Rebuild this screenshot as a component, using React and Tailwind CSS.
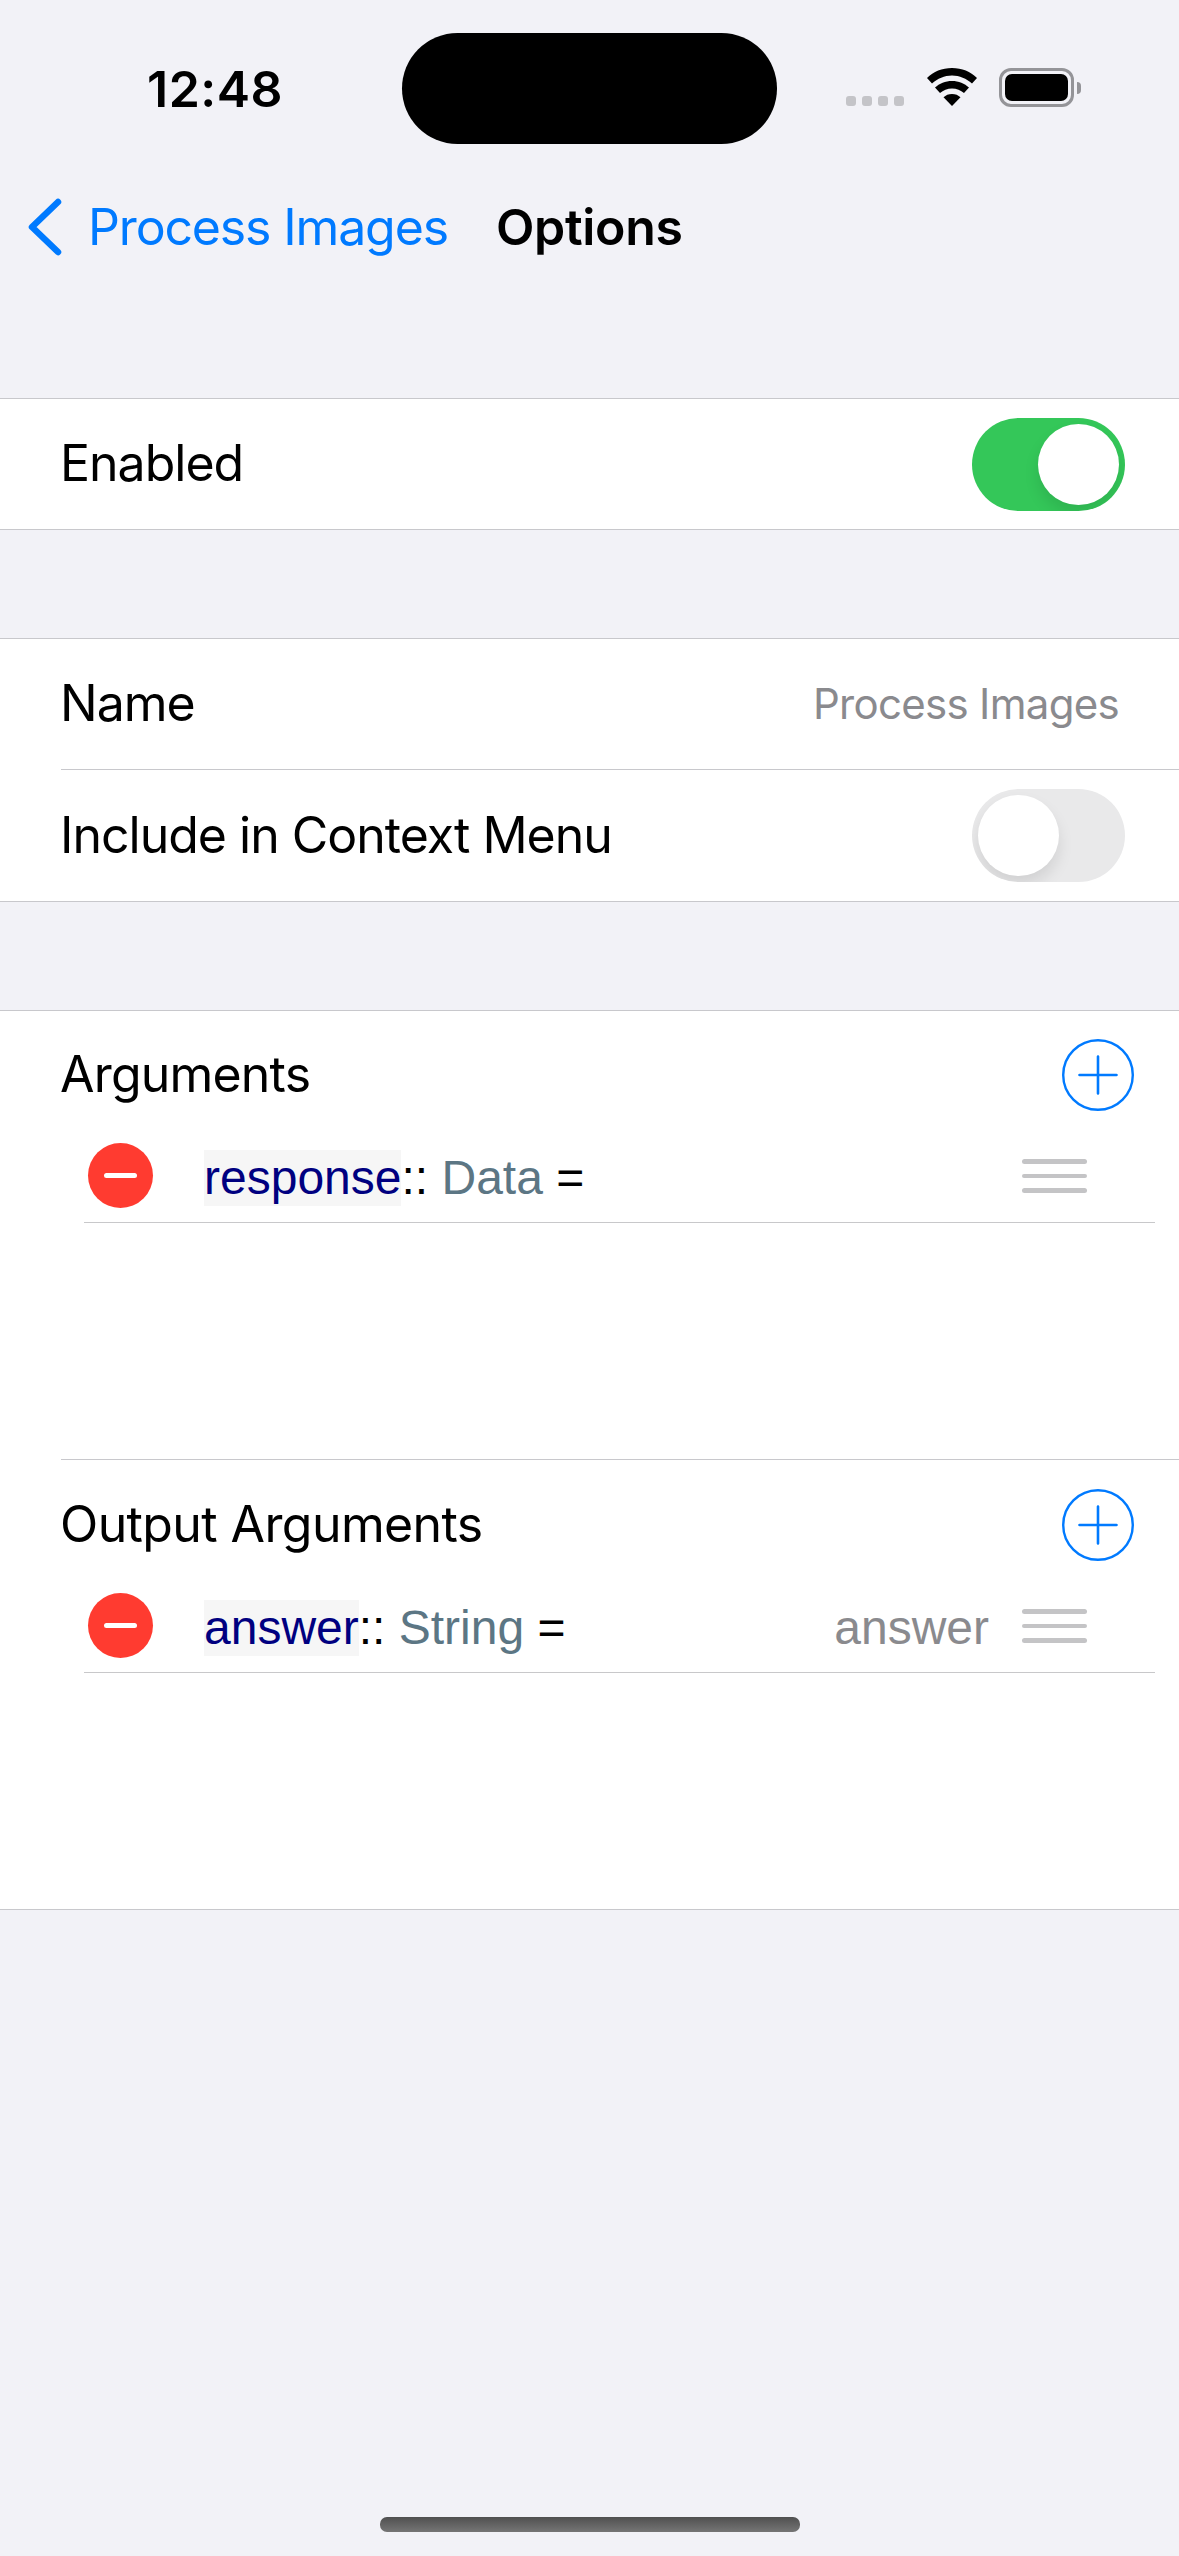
const sans = "font-['Inter','Noto_Sans',sans-serif]";
const label = "text-[50px] tracking-[-1px]";

function Toggle({ on }) {
  return (
    <div className={`w-[153px] h-[93px] rounded-full overflow-hidden flex items-center px-[6px] ${on ? "bg-[#34c759] justify-end" : "bg-[#e9e9ea] justify-start"}`}>
      <div className="w-[81px] h-[81px] rounded-full bg-white shadow-[0_9px_15px_rgba(0,0,0,0.1)]" />
    </div>
  );
}

function AddIcon() {
  return (
    <svg width="72" height="72" viewBox="0 0 72 72" fill="none" stroke="#007aff" strokeLinecap="round">
      <circle cx="36" cy="36" r="34.8" strokeWidth="2.4" />
      <path d="M36 17.5v37M17.5 36h37" strokeWidth="2.6" />
    </svg>
  );
}

function ArgRow({ name, type, value }) {
  return (
    <div className="ml-[84px] mr-[24px] h-[94px] flex items-center border-b-[1.5px] border-[#c8c8ca]">
      <div className="ml-[4px] mt-[1px] w-[65px] h-[65px] rounded-full bg-[#ff3b30] flex items-center justify-center shrink-0">
        <div className="w-[33px] h-[5px] rounded-full bg-white" />
      </div>
      <div className="ml-[51px] pt-[6px] flex items-center font-['Liberation_Sans',sans-serif] text-[48px] leading-[56px] text-black">
        <span className="bg-[#f6f6f6] text-[#000080]">{name}</span>
        <span>::&nbsp;</span>
        <span className="text-[#5c7684]">{type}</span>
        <span>&nbsp;=</span>
      </div>
      <div className="ml-auto pt-[6px] text-[48px] text-[#8a8a8e] font-['Liberation_Sans',sans-serif] mr-[33px]">{value}</div>
      <div className="mr-[68px] mt-[2px] w-[65px] flex flex-col gap-[10px] shrink-0">
        <div className="h-[4.5px] rounded-full bg-[#c4c4c6]" />
        <div className="h-[4.5px] rounded-full bg-[#c4c4c6]" />
        <div className="h-[4.5px] rounded-full bg-[#c4c4c6]" />
      </div>
    </div>
  );
}

export default function App() {
  return (
    <div className={`w-[1179px] h-[2556px] bg-[#f2f2f7] flex flex-col overflow-hidden text-black ${sans}`}>
      {/* status bar */}
      <div className="h-[144px] pt-[33px] pl-[147px] flex items-start">
        <div className="w-[255px] pt-[25px] text-[50px] leading-[62px] font-semibold tracking-[0.5px]">12:48</div>
        <div className="w-[375px] h-[111px] rounded-full bg-black" />
        <div className="ml-[69px] flex items-end mt-[35px] h-[39px]">
          <div className="flex gap-[6px] mb-[1px]">
            <div className="w-[10px] h-[10px] rounded-[3px] bg-[#c4c4c8]" />
            <div className="w-[10px] h-[10px] rounded-[3px] bg-[#c4c4c8]" />
            <div className="w-[10px] h-[10px] rounded-[3px] bg-[#c4c4c8]" />
            <div className="w-[10px] h-[10px] rounded-[3px] bg-[#c4c4c8]" />
          </div>
          <svg className="ml-[22px] mb-[1px]" width="52" height="38" viewBox="0 0 52 38" fill="#000">
            <path d="M26 0C16 0 7.500 3.600 1 10l5 5.600C11.500 10.500 18.500 7.500 26 7.500s14.500 3 20 8.100l5-5.600C44.500 3.600 36 0 26 0z" />
            <path d="M26 13c-6.600 0-12.600 2.500-17 6.600l5 5.500c3.200-2.900 7.400-4.700 12-4.700s8.800 1.800 12 4.700l5-5.500C38.600 15.500 32.600 13 26 13z" />
            <path d="M26 26c-3.300 0-6.300 1.200-8.500 3.300L26 38l8.500-8.700C32.300 27.200 29.300 26 26 26z" />
          </svg>
          <div className="ml-[21px] w-[75px] h-[39px] rounded-[12px] border-[3px] border-[#949498] p-[3px] flex">
            <div className="flex-1 rounded-[7px] bg-black" />
          </div>
          <div className="ml-[3px] mb-[13px] w-[4px] h-[12px] rounded-r-full bg-[#949498]" />
        </div>
      </div>

      {/* nav */}
      <div className="h-[88px] mt-[39px] pl-[27px] flex items-center">
        <svg width="36" height="60" viewBox="0 0 36 60" fill="none" stroke="#007aff" strokeWidth="6.500" strokeLinecap="round" strokeLinejoin="round">
          <path d="M31 5L5 30l26 25" />
        </svg>
        <div className="ml-[25px] text-[50px] tracking-[-1.15px] leading-[60px] text-[#007aff]">Process Images</div>
        <div className="ml-[48px] text-[50px] leading-[60px] font-semibold tracking-[-0.3px]">Options</div>
      </div>

      {/* enabled */}
      <div className="mt-[127px] h-[132px] pl-[60px] pr-[54px] flex items-center justify-between bg-white border-y-[1.5px] border-[#c8c8cc]">
        <div className={`pb-[2px] ${label}`}>Enabled</div>
        <Toggle on />
      </div>

      {/* name section */}
      <div className="mt-[108px] bg-white border-y-[1.5px] border-[#c8c8cc]">
        <div className="h-[129.5px] pl-[60px] pr-[60px] flex items-center justify-between">
          <div className={label}>Name</div>
          <div className="text-[42px] tracking-[-0.7px] text-[#8a8a8e]">Process Images</div>
        </div>
        <div className="ml-[61px] h-[1.5px] bg-[#c8c8cc]" />
        <div className="h-[131px] pl-[60px] pr-[54px] flex items-center justify-between">
          <div className={label}>Include in Context Menu</div>
          <Toggle />
        </div>
      </div>

      {/* arguments */}
      <div className="mt-[108px] h-[900px] bg-white border-y-[1.5px] border-[#c8c8cc]">
        <div className="h-[117.5px] pl-[60px] pr-[45px] pt-[9.5px] flex items-center justify-between">
          <div className="text-[50px] tracking-[-0.8px]">Arguments</div>
          <AddIcon />
        </div>
        <ArgRow name="response" type="Data" />
        <div className="ml-[61px] mt-[236px] h-[1.5px] bg-[#c8c8cc]" />
        <div className="h-[118.5px] pl-[60px] pr-[45px] pt-[10.5px] flex items-center justify-between">
          <div className="text-[50px] tracking-[-0.6px]">Output Arguments</div>
          <AddIcon />
        </div>
        <ArgRow name="answer" type="String" value="answer" />
      </div>

      {/* home indicator */}
      <div className="mt-auto mb-[24px] mx-auto w-[420px] h-[15px] rounded-[7px] bg-gradient-to-b from-[#505050] to-[#757575]" />
    </div>
  );
}
